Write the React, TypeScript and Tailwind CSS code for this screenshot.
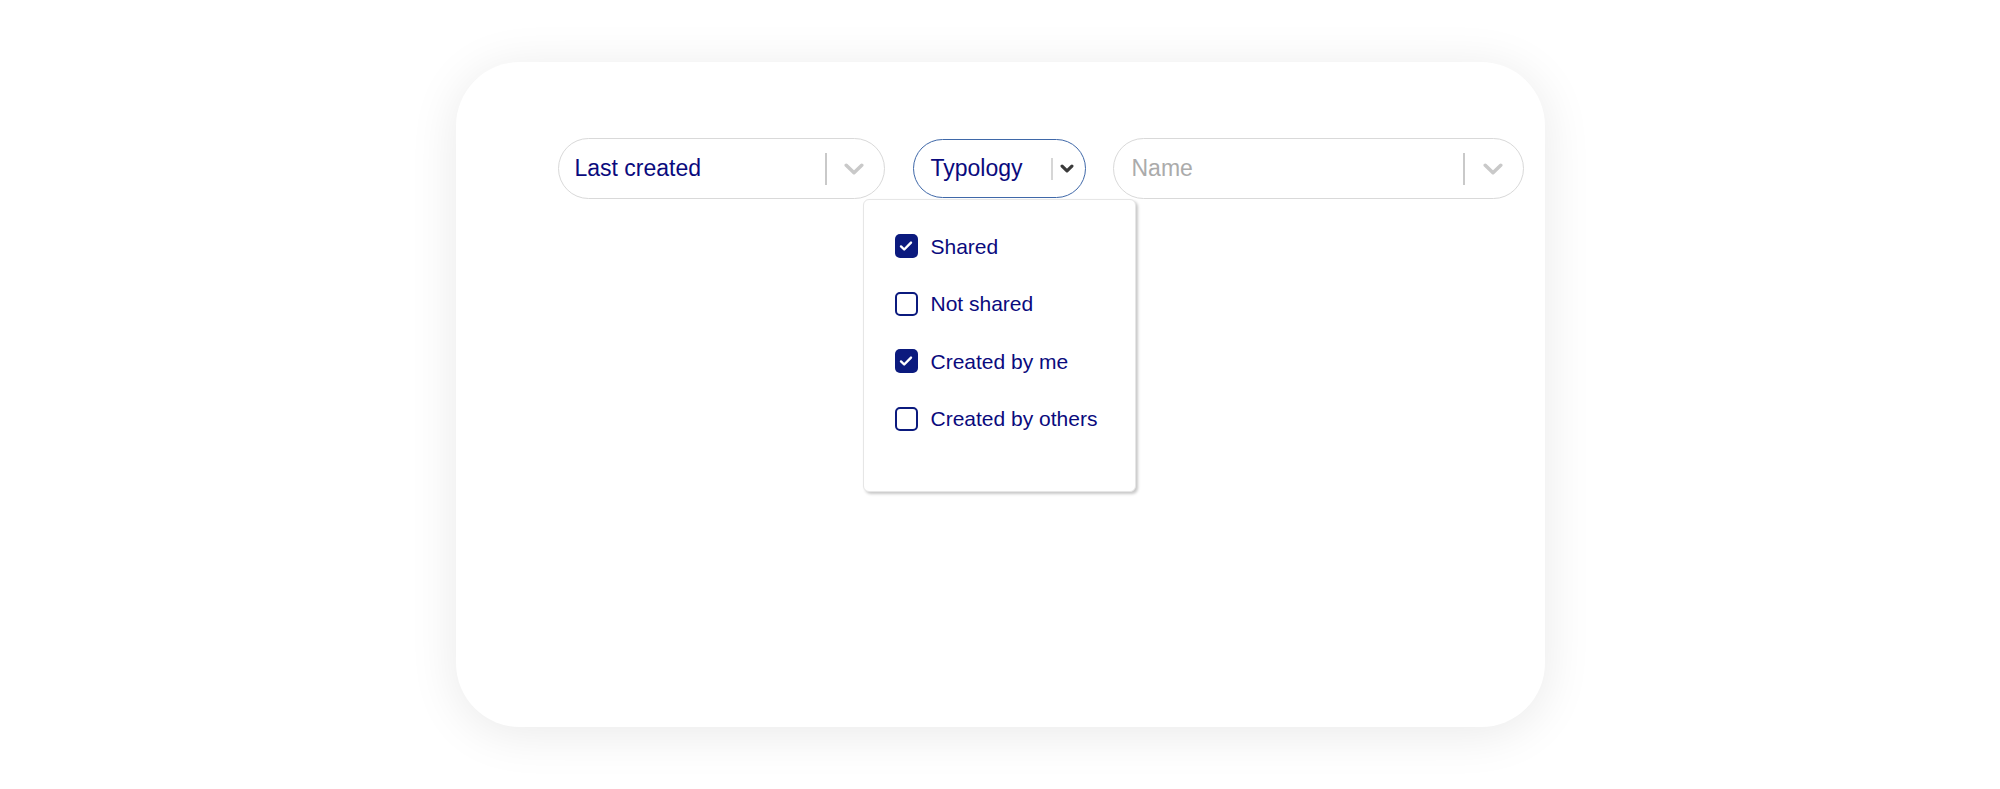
import React from "react";

function Chevron({ color, w, h, sw }: { color: string; w: number; h: number; sw: number }) {
  return (
    <svg width={w} height={h} viewBox={`0 0 ${w} ${h}`} fill="none">
      <path
        d={`M${sw / 2 + 0.5} ${sw / 2 + 0.5} L${w / 2} ${h - sw / 2 - 0.5} L${w - sw / 2 - 0.5} ${sw / 2 + 0.5}`}
        stroke={color}
        strokeWidth={sw}
        strokeLinecap="round"
        strokeLinejoin="round"
      />
    </svg>
  );
}

function CheckBox({ checked }: { checked: boolean }) {
  if (checked) {
    return (
      <div className="w-[23px] h-[24px] rounded-[5px] bg-[#0b1a7e] flex items-center justify-center shrink-0">
        <svg width="18" height="18" viewBox="0 0 18 18" fill="none">
          <path d="M4 9.4l3.2 3.1L14 5.6" stroke="white" strokeWidth="2.4" strokeLinecap="round" strokeLinejoin="round" />
        </svg>
      </div>
    );
  }
  return <div className="w-[23px] h-[24px] rounded-[5px] border-2 border-[#0b1a7e] bg-white shrink-0" />;
}

const items: { label: string; checked: boolean }[] = [
  { label: "Shared", checked: true },
  { label: "Not shared", checked: false },
  { label: "Created by me", checked: true },
  { label: "Created by others", checked: false },
];

export default function App() {
  return (
    <div
      className="w-full h-[789px] bg-white flex items-center justify-center"
      style={{ fontFamily: '"Liberation Sans", Arial, Helvetica, sans-serif' }}
    >
      <div className="w-[1089px] h-[665px] bg-white rounded-[64px] shadow-[0_6px_50px_rgba(0,0,0,0.09)] pl-[102px] pt-[76px]">
        <div className="flex items-center">
          {/* Last created */}
          <div className="w-[327px] h-[61px] rounded-full border-[1.5px] border-[#d9d9d9] flex items-center pl-[16px] pr-[20px]">
            <span className="flex-1 text-[23px] text-[#0a0a7d]">Last created</span>
            <div className="w-[2px] h-[32px] bg-[#c9c9c9]" />
            <div className="ml-[17px]">
              <Chevron color="#c9c9c9" w={20} h={12} sw={3.5} />
            </div>
          </div>

          {/* Typology */}
          <div className="relative ml-[28px]">
            <div className="w-[173px] h-[59px] rounded-full border-[1.5px] border-[#3f68a8] flex items-center pl-[17px] pr-[11px]">
              <span className="flex-1 text-[23px] text-[#0a0a7d]">Typology</span>
              <div className="w-[2px] h-[22px] bg-[#d6d6d6]" />
              <div className="ml-[7px]">
                <Chevron color="#3a3a3a" w={14} h={9} sw={3.2} />
              </div>
            </div>
            <div className="absolute left-[-50px] top-[60px] w-[273px] h-[293px] bg-white rounded-[6px] border border-[#e6e6e6] shadow-[2px_2px_3px_rgba(0,0,0,0.22)] pl-[31px] pt-[34px] z-10">
              <div className="flex flex-col gap-[33.5px]">
                {items.map((it) => (
                  <div key={it.label} className="flex items-center h-[24px] gap-[13px]">
                    <CheckBox checked={it.checked} />
                    <span className="text-[21px] leading-none text-[#0a0a7d]">{it.label}</span>
                  </div>
                ))}
              </div>
            </div>
          </div>

          {/* Name */}
          <div className="ml-[27px] w-[411px] h-[61px] rounded-full border-[1.5px] border-[#d9d9d9] flex items-center pl-[18px] pr-[20px]">
            <span className="flex-1 text-[23px] text-[#ababab]">Name</span>
            <div className="w-[2px] h-[32px] bg-[#c9c9c9]" />
            <div className="ml-[18px]">
              <Chevron color="#c9c9c9" w={20} h={12} sw={3.5} />
            </div>
          </div>
        </div>
      </div>
    </div>
  );
}
